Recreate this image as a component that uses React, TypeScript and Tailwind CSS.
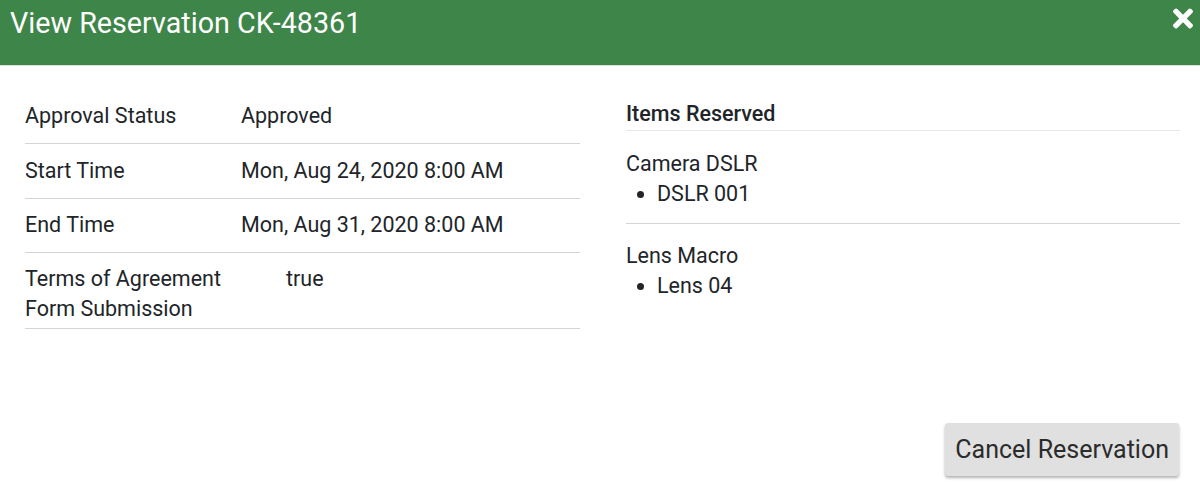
import { FaTimes } from 'react-icons/fa';

const details = [
  { label: 'Approval Status', value: 'Approved' },
  { label: 'Start Time', value: 'Mon, Aug 24, 2020 8:00 AM' },
  { label: 'End Time', value: 'Mon, Aug 31, 2020 8:00 AM' },
];

const items = [
  { name: 'Camera DSLR', units: ['DSLR 001'] },
  { name: 'Lens Macro', units: ['Lens 04'] },
];

export default function App() {
  return (
    <div className="h-[487px] w-[1200px] flex flex-col bg-white text-[#212529] font-['Roboto',sans-serif]">
      <div className="h-[66px] shrink-0 flex items-start justify-between bg-[#3d8548] border-b border-[#dedede] pl-[10px] pr-[7px]">
        <h1 className="mt-[5px] text-[28.7px] leading-[36px] text-white">View Reservation CK-48361</h1>
        <button className="mt-[4px] text-white">
          <FaTimes className="w-[20px] h-[29px]" />
        </button>
      </div>

      <div className="flex px-[25px] pr-[20px] gap-[46px] text-[21.5px] leading-[30px]">
        <div className="w-[555px] pt-[23px]">
          {details.map((row, i) => (
            <div
              key={row.label}
              className={`flex ${i === 2 ? 'pt-[11px] pb-[12px]' : 'py-[12px]'} border-b-[1.5px] border-[#d4d4d4]`}
            >
              <div className="w-[216px]">{row.label}</div>
              <div>{row.value}</div>
            </div>
          ))}
          <div className="flex pt-[11px] pb-[4px] border-b-[1.5px] border-[#d4d4d4]">
            <div className="w-[261px]">
              Terms of Agreement
              <br />
              Form Submission
            </div>
            <div>true</div>
          </div>
        </div>

        <div className="flex-1 pt-[33px]">
          <h2 className="font-medium border-b border-[#e6e6e6] pb-px">Items Reserved</h2>
          {items.map((item, i) => (
            <div
              key={item.name}
              className={i < items.length - 1 ? 'pt-[18px] pb-[14px] border-b-[1.5px] border-[#d4d4d4]' : 'pt-[17px]'}
            >
              <div>{item.name}</div>
              <ul className="list-disc pl-[31px]">
                {item.units.map((u) => (
                  <li key={u}>{u}</li>
                ))}
              </ul>
            </div>
          ))}
        </div>
      </div>

      <div className="mt-auto flex justify-end pr-[21px] pb-[11px]">
        <button className="h-[53px] px-[10px] rounded-[3px] bg-[#e0e0e0] text-[25px] text-[#2b2b2b] shadow-[0_2px_3px_rgba(0,0,0,0.3)]">
          Cancel Reservation
        </button>
      </div>
    </div>
  );
}
